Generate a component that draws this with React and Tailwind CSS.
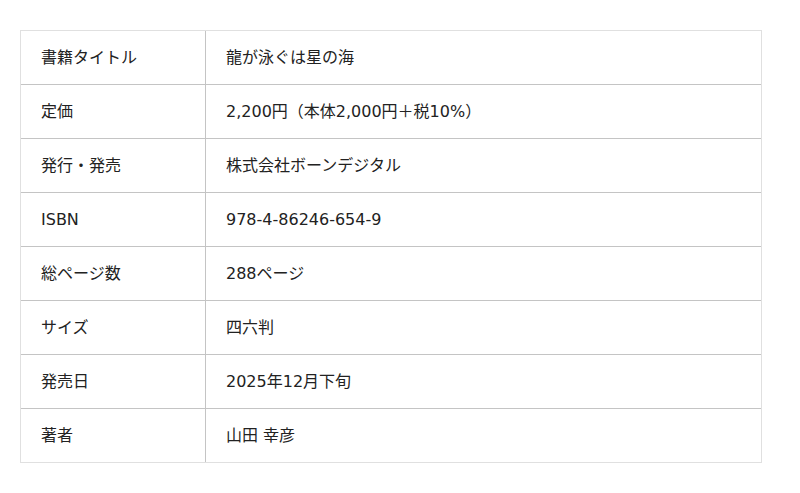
const ROWS = [
  ['書籍タイトル', '龍が泳ぐは星の海'],
  ['定価', '2,200円（本体2,000円＋税10%）'],
  ['発行・発売', '株式会社ボーンデジタル'],
  ['ISBN', '978-4-86246-654-9'],
  ['総ページ数', '288ページ'],
  ['サイズ', '四六判'],
  ['発売日', '2025年12月下旬'],
  ['著者', '山田 幸彦'],
]

export default function App() {
  return (
    <div
      className="min-h-[493px] bg-white pt-[30px] px-[20px]"
      style={{ fontFamily: '"DejaVu Sans", "Noto Sans CJK JP", sans-serif' }}
    >
      {/* Spec table */}
      <div className="w-[742px] border border-[#e0e0e0]">
        {ROWS.map(([label, value], i) => (
          <div
            key={label}
            className={`flex text-[16px] text-[#222] ${i === 0 ? 'h-[53px]' : 'h-[54px] border-t border-[#c4c4c4]'}`}
          >
            <div className="w-[185px] shrink-0 flex items-center pl-[20px] border-r border-[#c4c4c4]">
              {label}
            </div>
            <div className="flex-1 flex items-center pl-[20px]">{value}</div>
          </div>
        ))}
      </div>
    </div>
  )
}
